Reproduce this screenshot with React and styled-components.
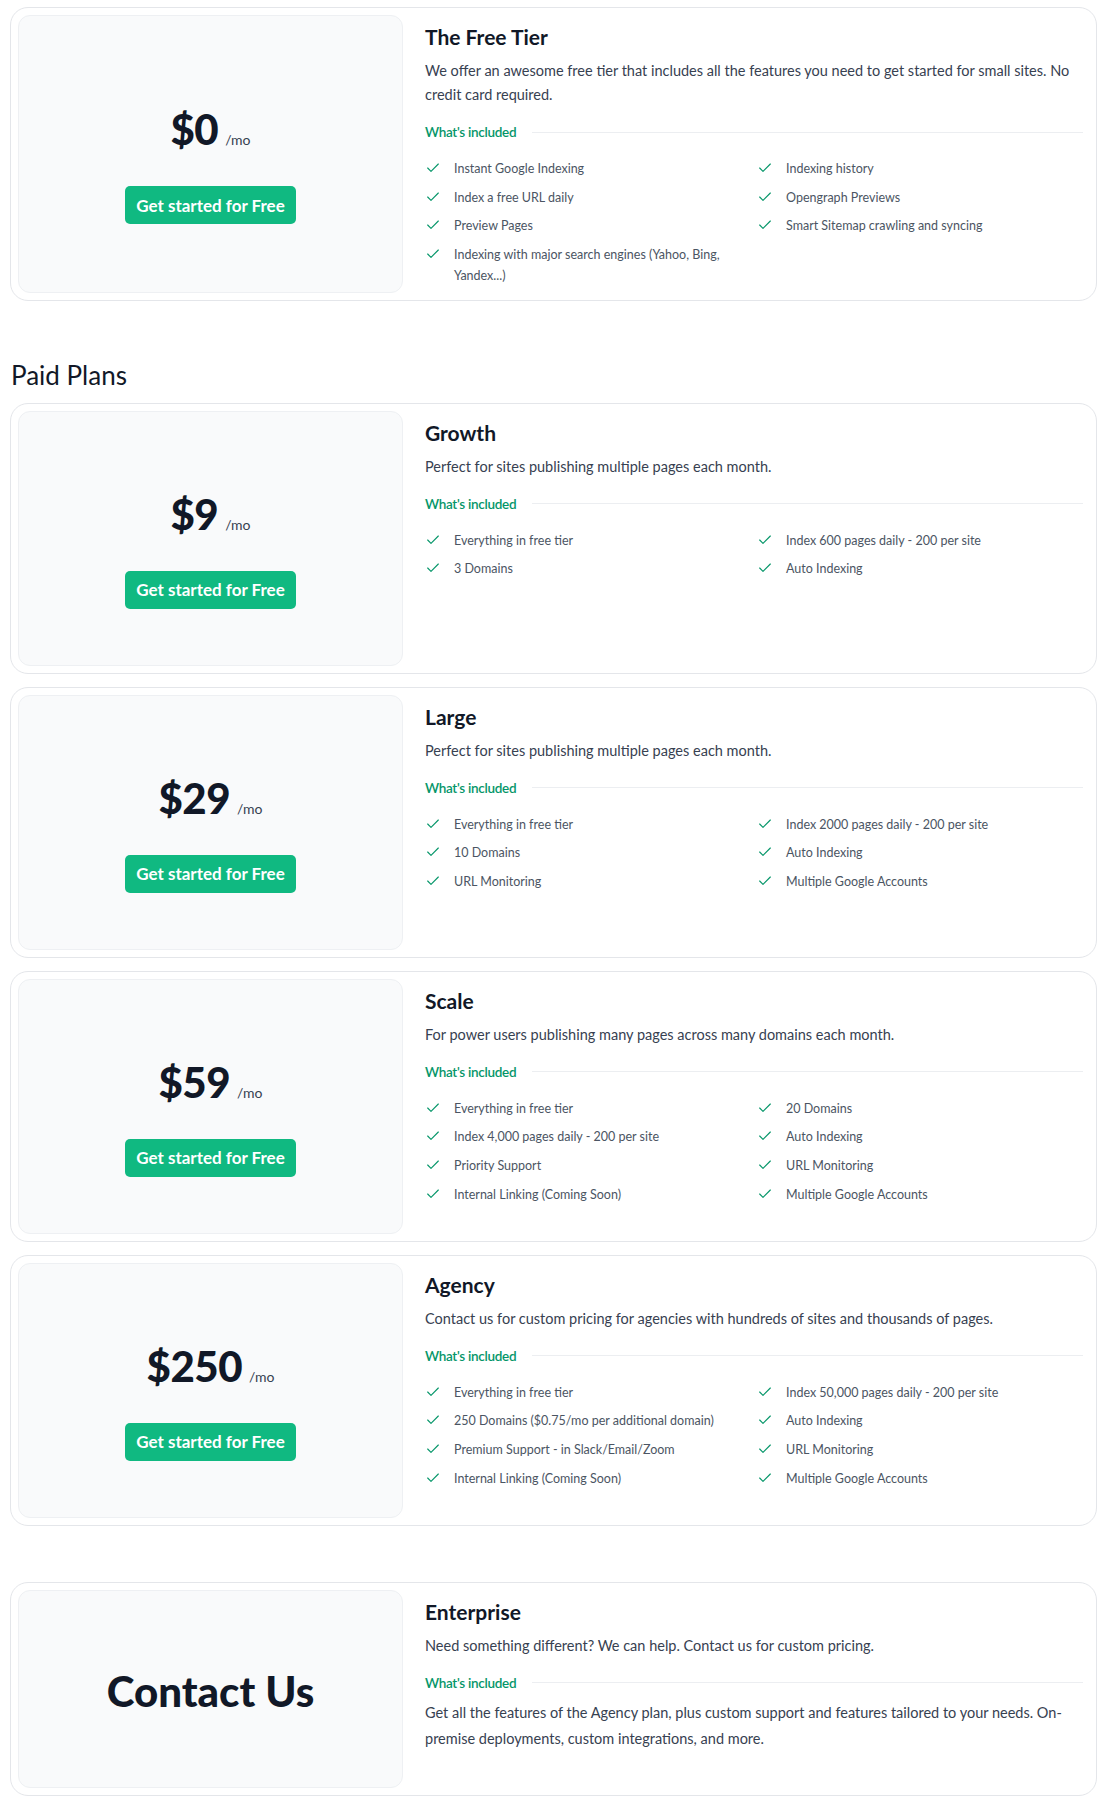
import styled, { createGlobalStyle } from "styled-components";

const GlobalStyle = createGlobalStyle`
    body {
        margin: 0;
        background: #ffffff;
        font-family: "Lato", "Liberation Sans", sans-serif;
        color: #111827;
    }
`

const FREE = {
    title: "The Free Tier",
    desc: "We offer an awesome free tier that includes all the features you need to get started for small sites. No credit card required.",
    price: "$0",
    features: [
        "Instant Google Indexing",
        "Indexing history",
        "Index a free URL daily",
        "Opengraph Previews",
        "Preview Pages",
        "Smart Sitemap crawling and syncing",
        "Indexing with major search engines (Yahoo, Bing, Yandex...)",
    ],
}

const PLANS = [
    {
        title: "Growth",
        desc: "Perfect for sites publishing multiple pages each month.",
        price: "$9",
        features: [
            "Everything in free tier",
            "Index 600 pages daily - 200 per site",
            "3 Domains",
            "Auto Indexing",
        ],
    },
    {
        title: "Large",
        desc: "Perfect for sites publishing multiple pages each month.",
        price: "$29",
        features: [
            "Everything in free tier",
            "Index 2000 pages daily - 200 per site",
            "10 Domains",
            "Auto Indexing",
            "URL Monitoring",
            "Multiple Google Accounts",
        ],
    },
    {
        title: "Scale",
        desc: "For power users publishing many pages across many domains each month.",
        price: "$59",
        features: [
            "Everything in free tier",
            "20 Domains",
            "Index 4,000 pages daily - 200 per site",
            "Auto Indexing",
            "Priority Support",
            "URL Monitoring",
            "Internal Linking (Coming Soon)",
            "Multiple Google Accounts",
        ],
    },
    {
        title: "Agency",
        desc: "Contact us for custom pricing for agencies with hundreds of sites and thousands of pages.",
        price: "$250",
        features: [
            "Everything in free tier",
            "Index 50,000 pages daily - 200 per site",
            "250 Domains ($0.75/mo per additional domain)",
            "Auto Indexing",
            "Premium Support - in Slack/Email/Zoom",
            "URL Monitoring",
            "Internal Linking (Coming Soon)",
            "Multiple Google Accounts",
        ],
    },
]

function CheckIcon(){
    return(
        <Check viewBox="0 0 24 24" fill="none" stroke="currentColor" strokeWidth="1.7" strokeLinecap="round" strokeLinejoin="round">
            <path d="M20 6 9 17l-5-5"/>
        </Check>
    )
}

function Included(){
    return(
        <IncludedRow>
            <IncludedLabel>What's included</IncludedLabel>
            <Divider/>
        </IncludedRow>
    )
}

function PlanCard({plan}){
    return(
        <Card>
            <PricePanel>
                <PriceRow>
                    <Amount>{plan.price}</Amount>
                    <Per>/mo</Per>
                </PriceRow>
                <CtaButton type="button">Get started for Free</CtaButton>
            </PricePanel>
            <Details>
                <PlanTitle>{plan.title}</PlanTitle>
                <PlanDesc>{plan.desc}</PlanDesc>
                <Included/>
                <FeatureList>
                    {plan.features.map((f) => (
                        <Feature key={f}>
                            <CheckIcon/>
                            <span>{f}</span>
                        </Feature>
                    ))}
                </FeatureList>
            </Details>
        </Card>
    )
}

export default function App(){
    return(
        <Page>
            <GlobalStyle/>
            <PlanCard plan={FREE}/>
            <SectionTitle>Paid Plans</SectionTitle>
            <CardStack>
                {PLANS.map((p) => <PlanCard key={p.title} plan={p}/>)}
            </CardStack>
            <Card $spaced>
                <PricePanel>
                    <ContactText>Contact Us</ContactText>
                </PricePanel>
                <Details>
                    <PlanTitle>Enterprise</PlanTitle>
                    <PlanDesc>Need something different? We can help. Contact us for custom pricing.</PlanDesc>
                    <Included/>
                    <EnterpriseText>
                        Get all the features of the Agency plan, plus custom support and features tailored to your needs. On-premise deployments, custom integrations, and more.
                    </EnterpriseText>
                </Details>
            </Card>
        </Page>
    )
}

const Page = styled.div`
    padding: 7px 11px 3px 10px;
`

const CardStack = styled.div`
    display: flex;
    flex-direction: column;
    gap: 13px;
`

const Card = styled.div`
    display: grid;
    grid-template-columns: 385px 1fr;
    padding: 7px;
    border: 1px solid #e4e6ea;
    border-radius: 18px;
    background: #fff;
    margin-top: ${(p) => (p.$spaced ? "56px" : "0")};
`

const PricePanel = styled.div`
    display: flex;
    flex-direction: column;
    align-items: center;
    justify-content: center;
    gap: 19px;
    padding: 56px 24px;
    background: #f9fafb;
    border: 1px solid #eef0f3;
    border-radius: 12px;
`

const PriceRow = styled.div`
    display: flex;
    align-items: baseline;
    gap: 7px;
    box-sizing: border-box;
    height: 84px;
    padding-top: 8px;
    line-height: 76px;
`

const Amount = styled.span`
    font-size: 42px;
    font-weight: 900;
    color: #111827;
    letter-spacing: -0.5px;
`

const Per = styled.span`
    font-size: 14px;
    color: #374151;
`

const ContactText = styled.div`
    box-sizing: border-box;
    height: 84px;
    padding-top: 4px;
    font-size: 42px;
    font-weight: 900;
    line-height: 80px;
    color: #111827;
`

const CtaButton = styled.button`
    height: 38px;
    padding: 0 11px;
    border: none;
    border-radius: 5px;
    background: #10b981;
    color: #fff;
    font-family: "Lato", "Liberation Sans", sans-serif;
    font-size: 17px;
    font-weight: 700;
    cursor: pointer;
`

const Details = styled.div`
    padding: 8px 6px 7px 22px;
    min-width: 0;
`

const PlanTitle = styled.h3`
    margin: 0;
    font-size: 21px;
    line-height: 28px;
    font-weight: 700;
    color: #111827;
`

const PlanDesc = styled.p`
    margin: 8px 0 0;
    font-size: 14.5px;
    line-height: 24px;
    color: #374151;
`

const IncludedRow = styled.div`
    display: flex;
    align-items: center;
    gap: 16px;
    margin-top: 15px;
`

const IncludedLabel = styled.span`
    flex: none;
    font-size: 13.5px;
    line-height: 20px;
    font-weight: 600;
    letter-spacing: -0.3px;
    color: #059669;
`

const Divider = styled.div`
    flex: 1;
    height: 1px;
    background: #eceef1;
`

const FeatureList = styled.ul`
    list-style: none;
    margin: 16px 0 0;
    padding: 0;
    display: grid;
    grid-template-columns: 1fr 1fr;
    column-gap: 6px;
    row-gap: 7.6px;
`

const Feature = styled.li`
    display: flex;
    align-items: flex-start;
    gap: 13px;
    font-size: 12.5px;
    line-height: 21px;
    color: #4b5563;
`

const Check = styled.svg`
    flex: none;
    width: 16px;
    height: 16px;
    margin-top: 2px;
    color: #059669;
`

const SectionTitle = styled.h2`
    margin: 58px 0 12px 1px;
    font-size: 26px;
    line-height: 32px;
    font-weight: 400;
    color: #111827;
`

const EnterpriseText = styled.p`
    margin: 7px 0 0;
    font-size: 14.5px;
    line-height: 26px;
    color: #374151;
`
